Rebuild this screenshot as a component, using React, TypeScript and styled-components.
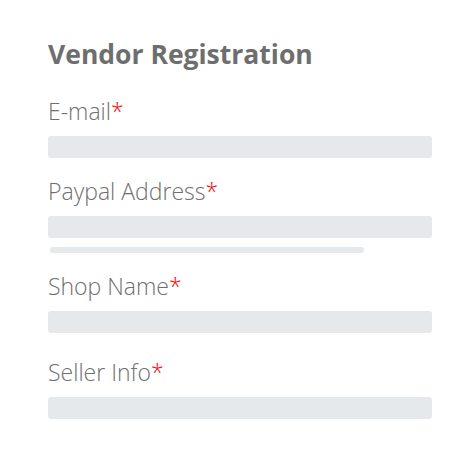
import styled, { createGlobalStyle } from 'styled-components';

const GlobalStyle = createGlobalStyle`
  body {
    margin: 0;
    background: #ffffff;
    font-family: "Open Sans", "Liberation Sans", sans-serif;
  }
`;

const Form = styled.div`
  width: 384px;
  padding: 36px 0 0 48px;
`;

const Title = styled.h2`
  margin: 0 0 24px;
  font-size: 26.5px;
  line-height: 36px;
  font-weight: 700;
  color: #6e6e6e;
`;

const Field = styled.div<{ $gap: number }>`
  margin-bottom: ${({ $gap }) => $gap}px;
`;

const Label = styled.label`
  display: block;
  font-size: 23px;
  line-height: 31px;
  font-weight: 300;
  color: #6f6f6f;
  margin-bottom: 9px;
`;

const Required = styled.span`
  color: #f00;
`;

const Input = styled.div`
  height: 22px;
  border-radius: 3px;
  background: #e5e9ec;
`;

const StrengthBar = styled.div`
  width: 314px;
  height: 6px;
  margin: 9px 0 0 2px;
  border-radius: 3px;
  background: #e5e9ec;
`;

const fields = [
  { label: 'E-mail', gap: 18 },
  { label: 'Paypal Address', gap: 18, bar: true },
  { label: 'Shop Name', gap: 24 },
  { label: 'Seller Info', gap: 0 },
];

export default function App() {
  return (
    <>
      <GlobalStyle />
      <Form>
        <Title>Vendor Registration</Title>
        {fields.map((f) => (
          <Field key={f.label} $gap={f.gap}>
            <Label>
              {f.label}
              <Required>*</Required>
            </Label>
            <Input />
            {f.bar && <StrengthBar />}
          </Field>
        ))}
      </Form>
    </>
  );
}
